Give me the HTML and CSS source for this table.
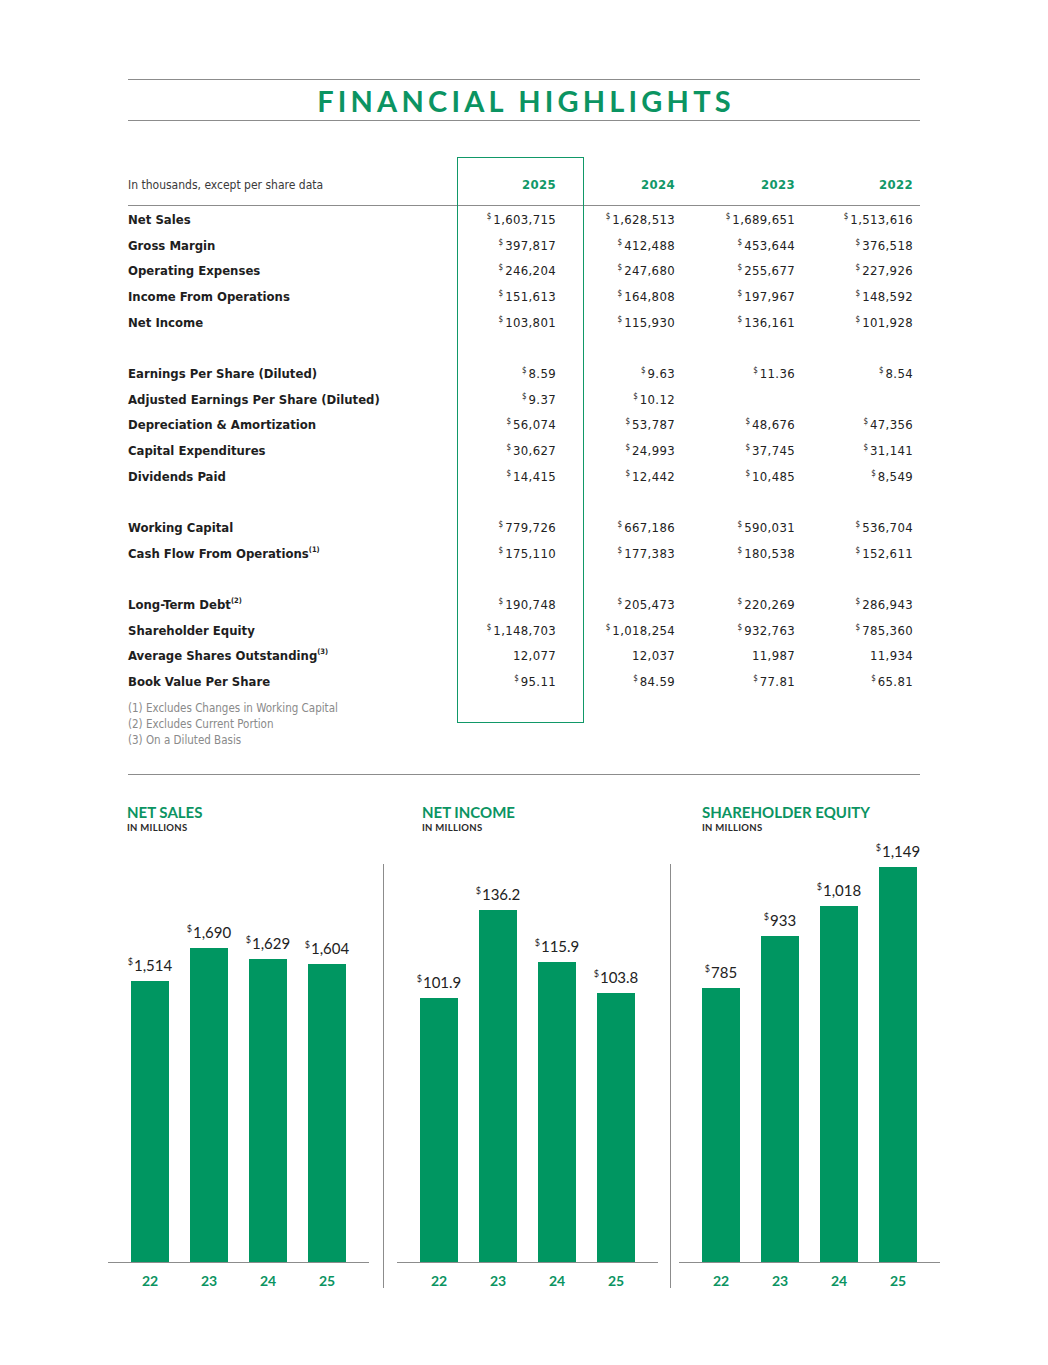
FILE: index.html
```html
<!DOCTYPE html>
<html lang="en">
<head>
<meta charset="utf-8">
<title>Financial Highlights</title>
<link rel="stylesheet" href="styles.css">
</head>
<body>
<div class="page">
  <header class="title-bar"><h1>FINANCIAL HIGHLIGHTS</h1></header>

  <section class="fin">
    <div class="box"></div>
    <div class="row head">
      <span class="label">In thousands, except per share data</span>
      <span class="c c1">2025</span><span class="c c2">2024</span><span class="c c3">2023</span><span class="c c4">2022</span>
    </div>
    <div class="rows">
    <div class="row"><span class="label">Net Sales</span><span class="c c1"><span class="d">$</span>1,603,715</span><span class="c c2"><span class="d">$</span>1,628,513</span><span class="c c3"><span class="d">$</span>1,689,651</span><span class="c c4"><span class="d">$</span>1,513,616</span></div>
    <div class="row"><span class="label">Gross Margin</span><span class="c c1"><span class="d">$</span>397,817</span><span class="c c2"><span class="d">$</span>412,488</span><span class="c c3"><span class="d">$</span>453,644</span><span class="c c4"><span class="d">$</span>376,518</span></div>
    <div class="row"><span class="label">Operating Expenses</span><span class="c c1"><span class="d">$</span>246,204</span><span class="c c2"><span class="d">$</span>247,680</span><span class="c c3"><span class="d">$</span>255,677</span><span class="c c4"><span class="d">$</span>227,926</span></div>
    <div class="row"><span class="label">Income From Operations</span><span class="c c1"><span class="d">$</span>151,613</span><span class="c c2"><span class="d">$</span>164,808</span><span class="c c3"><span class="d">$</span>197,967</span><span class="c c4"><span class="d">$</span>148,592</span></div>
    <div class="row"><span class="label">Net Income</span><span class="c c1"><span class="d">$</span>103,801</span><span class="c c2"><span class="d">$</span>115,930</span><span class="c c3"><span class="d">$</span>136,161</span><span class="c c4"><span class="d">$</span>101,928</span></div>
    <div class="row blank"></div>
    <div class="row"><span class="label">Earnings Per Share (Diluted)</span><span class="c c1"><span class="d">$</span>8.59</span><span class="c c2"><span class="d">$</span>9.63</span><span class="c c3"><span class="d">$</span>11.36</span><span class="c c4"><span class="d">$</span>8.54</span></div>
    <div class="row"><span class="label">Adjusted Earnings Per Share (Diluted)</span><span class="c c1"><span class="d">$</span>9.37</span><span class="c c2"><span class="d">$</span>10.12</span><span class="c c3"></span><span class="c c4"></span></div>
    <div class="row"><span class="label">Depreciation &amp; Amortization</span><span class="c c1"><span class="d">$</span>56,074</span><span class="c c2"><span class="d">$</span>53,787</span><span class="c c3"><span class="d">$</span>48,676</span><span class="c c4"><span class="d">$</span>47,356</span></div>
    <div class="row"><span class="label">Capital Expenditures</span><span class="c c1"><span class="d">$</span>30,627</span><span class="c c2"><span class="d">$</span>24,993</span><span class="c c3"><span class="d">$</span>37,745</span><span class="c c4"><span class="d">$</span>31,141</span></div>
    <div class="row"><span class="label">Dividends Paid</span><span class="c c1"><span class="d">$</span>14,415</span><span class="c c2"><span class="d">$</span>12,442</span><span class="c c3"><span class="d">$</span>10,485</span><span class="c c4"><span class="d">$</span>8,549</span></div>
    <div class="row blank"></div>
    <div class="row"><span class="label">Working Capital</span><span class="c c1"><span class="d">$</span>779,726</span><span class="c c2"><span class="d">$</span>667,186</span><span class="c c3"><span class="d">$</span>590,031</span><span class="c c4"><span class="d">$</span>536,704</span></div>
    <div class="row"><span class="label">Cash Flow From Operations<sup class="fn">(1)</sup></span><span class="c c1"><span class="d">$</span>175,110</span><span class="c c2"><span class="d">$</span>177,383</span><span class="c c3"><span class="d">$</span>180,538</span><span class="c c4"><span class="d">$</span>152,611</span></div>
    <div class="row blank"></div>
    <div class="row"><span class="label">Long-Term Debt<sup class="fn">(2)</sup></span><span class="c c1"><span class="d">$</span>190,748</span><span class="c c2"><span class="d">$</span>205,473</span><span class="c c3"><span class="d">$</span>220,269</span><span class="c c4"><span class="d">$</span>286,943</span></div>
    <div class="row"><span class="label">Shareholder Equity</span><span class="c c1"><span class="d">$</span>1,148,703</span><span class="c c2"><span class="d">$</span>1,018,254</span><span class="c c3"><span class="d">$</span>932,763</span><span class="c c4"><span class="d">$</span>785,360</span></div>
    <div class="row"><span class="label">Average Shares Outstanding<sup class="fn">(3)</sup></span><span class="c c1">12,077</span><span class="c c2">12,037</span><span class="c c3">11,987</span><span class="c c4">11,934</span></div>
    <div class="row"><span class="label">Book Value Per Share</span><span class="c c1"><span class="d">$</span>95.11</span><span class="c c2"><span class="d">$</span>84.59</span><span class="c c3"><span class="d">$</span>77.81</span><span class="c c4"><span class="d">$</span>65.81</span></div>
    </div>
    <div class="notes">
      <p>(1) Excludes Changes in Working Capital</p>
      <p>(2) Excludes Current Portion</p>
      <p>(3) On a Diluted Basis</p>
    </div>
  </section>

  <hr class="divider">

  <section class="charts">
    <div class="chart ch1">
      <div class="chead"><div class="ctitle">NET SALES</div><div class="csub">IN MILLIONS</div></div>
      <div class="plot">
        <div class="bcol"><span class="val"><span class="d">$</span>1,514</span><div class="bar" style="height:281px"></div></div>
        <div class="bcol"><span class="val"><span class="d">$</span>1,690</span><div class="bar" style="height:314px"></div></div>
        <div class="bcol"><span class="val"><span class="d">$</span>1,629</span><div class="bar" style="height:303px"></div></div>
        <div class="bcol"><span class="val"><span class="d">$</span>1,604</span><div class="bar" style="height:298px"></div></div>
      </div>
      <div class="years"><span>22</span><span>23</span><span>24</span><span>25</span></div>
    </div>
    <div class="vdiv vd1"></div>
    <div class="chart ch2">
      <div class="chead"><div class="ctitle">NET INCOME</div><div class="csub">IN MILLIONS</div></div>
      <div class="plot">
        <div class="bcol"><span class="val"><span class="d">$</span>101.9</span><div class="bar" style="height:264px"></div></div>
        <div class="bcol"><span class="val"><span class="d">$</span>136.2</span><div class="bar" style="height:352px"></div></div>
        <div class="bcol"><span class="val"><span class="d">$</span>115.9</span><div class="bar" style="height:300px"></div></div>
        <div class="bcol"><span class="val"><span class="d">$</span>103.8</span><div class="bar" style="height:269px"></div></div>
      </div>
      <div class="years"><span>22</span><span>23</span><span>24</span><span>25</span></div>
    </div>
    <div class="vdiv vd2"></div>
    <div class="chart ch3">
      <div class="chead"><div class="ctitle">SHAREHOLDER EQUITY</div><div class="csub">IN MILLIONS</div></div>
      <div class="plot">
        <div class="bcol"><span class="val"><span class="d">$</span>785</span><div class="bar" style="height:274px"></div></div>
        <div class="bcol"><span class="val"><span class="d">$</span>933</span><div class="bar" style="height:326px"></div></div>
        <div class="bcol"><span class="val"><span class="d">$</span>1,018</span><div class="bar" style="height:356px"></div></div>
        <div class="bcol"><span class="val"><span class="d">$</span>1,149</span><div class="bar" style="height:395px"></div></div>
      </div>
      <div class="years"><span>22</span><span>23</span><span>24</span><span>25</span></div>
    </div>
  </section>
</div>
</body>
</html>
```
FILE: styles.css
```css
* { box-sizing: border-box; }
html, body { margin: 0; padding: 0; background: #fff; }
body { font-family: "DejaVu Sans Condensed", "DejaVu Sans", sans-serif; color: #222; }

.page {
  width: 792px;
  margin-left: 128px;
  padding-top: 79px;
}

.title-bar {
  border-top: 1px solid #8c8c8c;
  border-bottom: 1px solid #8c8c8c;
  height: 42px;
  display: flex;
  align-items: center;
  justify-content: center;
}
.title-bar h1 {
  margin: 0;
  font-family: Lato, "Liberation Sans", sans-serif;
  font-weight: 700;
  font-size: 29px;
  letter-spacing: 4.2px;
  color: #0b9462;
  line-height: 1;
  padding-left: 4px;
}

/* table */
.fin {
  position: relative;
  margin-top: 36px;
  padding-top: 16px;
}
.box {
  position: absolute;
  left: 329px;
  top: 0;
  width: 127px;
  height: 566px;
  border: 1.5px solid #119868;
}
.rows { padding-top: 1px; }
.row {
  display: flex;
  height: 25.67px;
  line-height: 25.67px;
  font-size: 13px;
}
.row .label {
  width: 329px;
  flex: none;
  font-weight: 700;
  color: #1e1e1e;
}
.c { flex: none; text-align: right; padding-right: 27px; white-space: nowrap; letter-spacing: 0.35px; }
.c1 { width: 126px; }
.c2 { width: 119px; }
.c3 { width: 120px; }
.c4 { width: 98px; padding-right: 7px; }
.d { font-size: 8px; position: relative; top: -5px; margin-right: 2px; letter-spacing: 0; }
.fn { font-size: 7.5px; vertical-align: baseline; position: relative; top: -6px; font-weight: 700; line-height: 0; }

.row.head {
  height: 33px;
  line-height: 24px;
  padding-bottom: 9px;
  border-bottom: 1px solid #8c8c8c;
}
.row.head .label { font-weight: 400; font-size: 12px; color: #3a3a3a; }
.row.head .c { font-weight: 700; color: #119868; font-size: 13px; }

.notes { margin-top: 6px; font-size: 11.5px; color: #8a8a8a; }
.notes p { margin: 0; line-height: 16px; }

.divider {
  margin: 26px 0 0;
  border: 0;
  border-top: 1px solid #8c8c8c;
  height: 0;
}

/* charts */
.charts {
  display: flex;
  margin-left: -20px;
  padding-top: 28px;
  font-family: Lato, "Liberation Sans", sans-serif;
}
.chart { width: 261px; flex: none; display: flex; flex-direction: column; }
.chead { height: 61px; }
.ch1 .chead { padding-left: 19px; }
.ch2 .chead { padding-left: 25px; }
.ch3 .chead { padding-left: 23px; }
.ctitle { font-size: 15px; font-weight: 700; color: #0b9462; line-height: 18px; }
.csub { font-size: 9.5px; font-weight: 700; color: #2a2a2a; line-height: 13px; letter-spacing: 0.3px; }

.plot {
  height: 399px;
  display: flex;
  justify-content: space-between;
  align-items: flex-end;
  padding: 0 23px;
  border-bottom: 1px solid #8c8c8c;
}
.bcol { width: 38px; display: flex; flex-direction: column; align-items: center; }
.val { font-size: 15px; line-height: 18px; margin-bottom: 4px; white-space: nowrap; color: #222; }
.val .d { font-size: 9px; top: -6px; margin-right: 1px; }
.bar { width: 38px; background: #009661; }

.years {
  display: flex;
  justify-content: space-between;
  padding: 10px 23px 0;
  height: 25px;
}
.years span {
  width: 38px;
  text-align: center;
  font-size: 14px;
  font-weight: 700;
  color: #0b9462;
  line-height: 16px;
}

.vdiv { width: 1px; background: #8c8c8c; margin-top: 61px; flex: none; }
.vd1 { margin-left: 14px; margin-right: 13px; }
.vd2 { margin-left: 12px; margin-right: 8px; }
```
